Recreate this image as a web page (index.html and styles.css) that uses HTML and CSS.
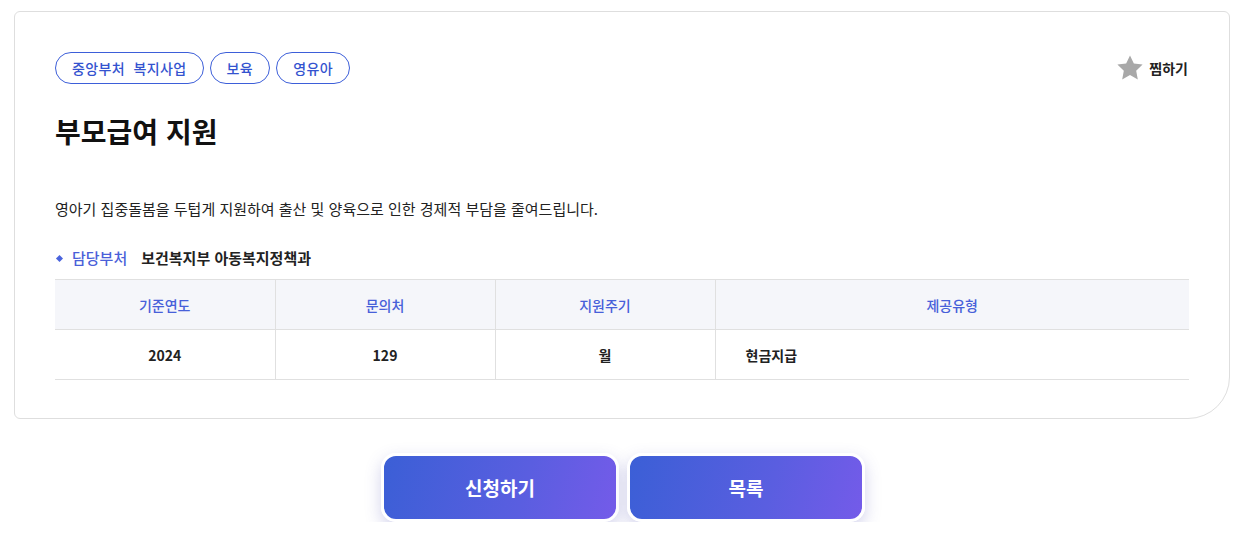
FILE: index.html
```html
<!DOCTYPE html>
<html lang="ko">
<head>
<meta charset="utf-8">
<link rel="stylesheet" href="styles.css">
</head>
<body>
<div class="page">
  <section class="card">
    <div class="top">
      <div class="tags">
        <span class="tag">중앙부처 복지사업</span>
        <span class="tag">보육</span>
        <span class="tag">영유아</span>
      </div>
      <button class="fav">
        <svg width="28" height="28" viewBox="0 0 24 24"><path d="M12 1.2l3.3 6.9 7.5 1-5.5 5.2 1.4 7.5L12 18.1l-6.7 3.7 1.4-7.5-5.5-5.2 7.5-1z" fill="#a8a8a8"/></svg>
        <span>찜하기</span>
      </button>
    </div>
    <h1 class="title">부모급여 지원</h1>
    <p class="desc">영아기 집중돌봄을 두텁게 지원하여 출산 및 양육으로 인한 경제적 부담을 줄여드립니다.</p>
    <div class="dept"><span class="dot"></span><span class="dept-label">담당부처</span><span class="dept-name">보건복지부 아동복지정책과</span></div>
    <table class="info">
      <thead>
        <tr><th class="c1">기준연도</th><th class="c2">문의처</th><th class="c3">지원주기</th><th class="c4">제공유형</th></tr>
      </thead>
      <tbody>
        <tr><td>2024</td><td>129</td><td>월</td><td class="left">현금지급</td></tr>
      </tbody>
    </table>
  </section>
  <div class="actions">
    <button class="btn">신청하기</button>
    <button class="btn">목록</button>
  </div>
</div>
</body>
</html>
```
FILE: styles.css
```css
* { box-sizing: border-box; }
html, body { margin: 0; padding: 0; background: #fff; }
body { font-family: "Noto Sans CJK KR", "Noto Sans", sans-serif; color: #222; }
.page { padding: 11px 11px 0 14px; }
.card {
  width: 1216px;
  border: 1px solid #dedede;
  border-radius: 6px 6px 42px 6px;
  padding: 40px 40px 40px 40px;
  height: 408px;
}
.top { display: flex; justify-content: space-between; align-items: center; }
.tags { display: flex; gap: 6px; }
.tag {
  display: inline-flex; align-items: center; height: 32px;
  padding: 0 16px; border: 1px solid #3d5fd9; border-radius: 16px;
  color: #3453cf; font-size: 14px; font-weight: 500;
  letter-spacing: 0.4px; word-spacing: 4px;
}
.fav {
  display: flex; align-items: center; gap: 5px; background: none; border: 0; padding: 0;
  font-family: inherit; font-size: 14px; font-weight: 700; color: #222; margin-right: 1px;
}
.title { margin: 27px 0 0; font-size: 28px; font-weight: 700; color: #111; line-height: 40px; }
.desc { margin: 47px 0 0; font-size: 15px; color: #222; line-height: 22px; }
.dept { display: flex; align-items: center; margin-top: 27px; font-size: 15px; line-height: 22px; }
.dot { width: 5px; height: 5px; background: #4a64dd; transform: rotate(45deg); margin: 0 10px 0 2px; }
.dept-label { color: #4a5fd9; font-weight: 500; margin-right: 14px; }
.dept-name { color: #222; font-weight: 700; }
.info { width: 100%; border-collapse: collapse; margin-top: 10px; font-size: 14px; }
.info th, .info td { height: 50px; text-align: center; border-left: 1px solid #e0e0e0; }
.info th:first-child, .info td:first-child { border-left: 0; }
.info thead tr { background: #f5f6fa; border-top: 1px solid #e0e0e0; border-bottom: 1px solid #e0e0e0; }
.info tbody tr { border-bottom: 1px solid #e0e0e0; }
.info th { color: #4760d9; font-weight: 500; }
.info td { color: #222; font-weight: 700; }
.info td.left { text-align: left; padding-left: 30px; }
.c1, .c2, .c3 { width: 220px; }
.actions { display: flex; justify-content: center; gap: 8px; margin-top: 34px; padding-left: 3px; }
.btn {
  width: 238px; height: 69px; border: 3px solid #fff; border-radius: 15px;
  background: linear-gradient(105deg, #3b5fd6 0%, #5a5ee0 60%, #745be9 100%);
  color: #fff; font-family: inherit; font-size: 19px; font-weight: 700;
  box-shadow: 0 6px 16px rgba(80, 80, 180, 0.25);
}
```
